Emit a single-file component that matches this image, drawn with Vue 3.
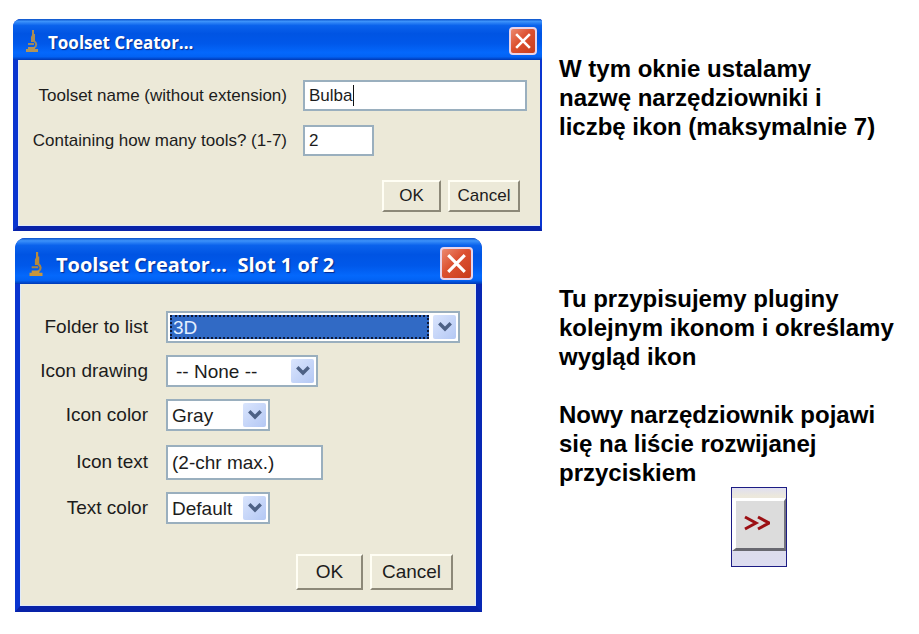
<template>
  <main class="page">
    <section class="dialog dialog-name">
      <header class="title-bar">
        <svg class="app-icon" viewBox="0 0 14 24" aria-hidden="true">
          <path d="M7 1h2v4h1v8H6V8l1-2z" fill="#a98d55" />
          <path d="M9 12c3 2 3 5 0 7M3 15h6" fill="none" stroke="#9a8a62" stroke-width="2" />
          <path d="M3 18h7v2h3v3H1v-3h2z" fill="#b29458" />
        </svg>
        <h1>Toolset Creator...</h1>
        <button class="close-btn" type="button" aria-label="Close">
          <svg viewBox="0 0 28 28"><path d="M6 6l16 16M22 6L6 22" /></svg>
        </button>
      </header>
      <form class="body" @submit.prevent>
        <div class="fields">
          <label for="toolset-name">Toolset name (without extension)</label>
          <div class="caret-field">
            <input id="toolset-name" v-model="toolsetName" type="text" />
            <span class="caret"></span>
          </div>
          <label for="tool-count">Containing how many tools? (1-7)</label>
          <input id="tool-count" v-model="toolCount" class="count" type="text" />
        </div>
        <div class="actions">
          <button class="btn ok" type="submit">OK</button>
          <button class="btn" type="button">Cancel</button>
        </div>
      </form>
    </section>

    <p class="note note-name">
      W tym oknie ustalamy<br />nazwę narzędziowniki i<br />liczbę ikon (maksymalnie 7)
    </p>

    <section class="dialog dialog-slot">
      <header class="title-bar">
        <svg class="app-icon" viewBox="0 0 14 24" aria-hidden="true">
          <path d="M7 1h2v4h1v8H6V8l1-2z" fill="#b88a3c" />
          <path d="M9 12c3 2 3 5 0 7M3 15h6" fill="none" stroke="#a98543" stroke-width="2" />
          <path d="M3 18h7v2h3v3H1v-3h2z" fill="#c8963c" />
        </svg>
        <h1>Toolset Creator...&nbsp; Slot 1 of 2</h1>
        <button class="close-btn" type="button" aria-label="Close">
          <svg viewBox="0 0 28 28"><path d="M6 6l16 16M22 6L6 22" /></svg>
        </button>
      </header>
      <form class="body" @submit.prevent>
        <div class="fields">
          <template v-for="field in fields" :key="field.id">
            <label :for="field.id">{{ field.label }}</label>
            <div v-if="field.options" class="combo" :class="field.id">
              <select :id="field.id" v-model="field.value">
                <option v-for="option in field.options" :key="option">{{ option }}</option>
              </select>
              <span class="arrow">
                <svg viewBox="0 0 14 10"><path d="M2 2l5 5 5-5" /></svg>
              </span>
            </div>
            <input v-else :id="field.id" v-model="field.value" :class="field.id" type="text" />
          </template>
        </div>
        <div class="actions">
          <button class="btn ok" type="submit">OK</button>
          <button class="btn" type="button">Cancel</button>
        </div>
      </form>
    </section>

    <div class="note note-slot">
      <p>Tu przypisujemy pluginy<br />kolejnym ikonom i określamy<br />wygląd ikon</p>
      <p>Nowy narzędziownik pojawi<br />się na liście rozwijanej<br />przyciskiem</p>
      <div class="switcher">
        <button type="button" aria-label="More tools">
          <svg viewBox="0 0 26 16"><path d="M1 2l11 6-11 6M14 2l11 6-11 6" /></svg>
        </button>
      </div>
    </div>
  </main>
</template>

<script setup>
import { ref } from "vue";

const toolsetName = ref("Bulba");
const toolCount = ref("2");

const fields = ref([
  { id: "folder", label: "Folder to list", value: "3D", options: ["3D"] },
  { id: "drawing", label: "Icon drawing", value: "-- None --", options: ["-- None --"] },
  { id: "icon-color", label: "Icon color", value: "Gray", options: ["Gray"] },
  { id: "icon-text", label: "Icon text", value: "(2-chr max.)" },
  { id: "text-color", label: "Text color", value: "Default", options: ["Default"] },
]);
</script>

<style>
body {
  margin: 0;
  background: #fff;
}
</style>

<style scoped>
* {
  box-sizing: border-box;
}
.page {
  display: grid;
  grid-template-columns: minmax(500px, 1fr) 343px;
  gap: 7px 17px;
  padding: 19px 17px 22px 13px;
  font-family: "Liberation Sans", Arial, sans-serif;
  color: #1c1c1c;
}
.dialog {
  display: flex;
  flex-direction: column;
  border-style: solid;
  border-color: #0a35d0;
  background: #0a35d0;
}
.dialog-name {
  border-width: 0 2px 5px 5px;
  border-bottom-color: #0822a8;
  border-radius: 8px 3px 0 0;
  font-size: 17px;
}
.dialog-slot {
  margin: 0 60px 0 2px;
  border-width: 0 6px 6px 5px;
  border-right-color: #0828b4;
  border-bottom-color: #0822a8;
  border-radius: 10px 10px 0 0;
  font-size: 19px;
}
.title-bar {
  display: flex;
  align-items: center;
  height: 41px;
  margin: 0 -2px 0 -5px;
  padding: 3px 5px 0 12px;
  border-radius: 8px 3px 0 0;
  background: linear-gradient(#0a50c8 0, #3c92fa 6%, #0a62ec 16%, #0054e3 36%, #0058ea 60%, #0468fc 82%, #0262f4 92%, #0038b4 100%);
}
.dialog-slot .title-bar {
  height: 46px;
  margin: 0 -6px 0 -5px;
  padding: 5px 9px 0 13px;
  border-radius: 10px 10px 0 0;
}
.app-icon {
  width: 14px;
  height: 24px;
  margin-right: 9px;
}
.dialog-slot .app-icon {
  width: 16px;
  height: 26px;
  margin-right: 12px;
}
h1 {
  flex: 1;
  margin: 0;
  padding-top: 3px;
  color: #fff;
  font-family: "Open Sans", "Noto Sans", sans-serif;
  font-size: 17px;
  font-weight: 700;
  line-height: 24px;
  white-space: nowrap;
  text-shadow: 1px 1px 1px #062a8c;
}
.dialog-slot h1 {
  font-size: 20px;
}
.close-btn {
  display: flex;
  width: 28px;
  height: 28px;
  padding: 0;
  border: 2px solid #e8d4ea;
  border-radius: 4px;
  background: linear-gradient(135deg, #ec8a70, #dc5030 45%, #c83c1c);
}
.dialog-slot .close-btn {
  width: 33px;
  height: 33px;
}
.close-btn svg {
  width: 100%;
  fill: none;
  stroke: #fff;
  stroke-width: 3;
}
.body {
  padding: 20px 13px 13px 0;
  border: solid #dfeafb;
  border-width: 0 0 1px 1px;
  background: #ece9d8;
}
.dialog-slot .body {
  padding: 27px 15px 15px 0;
  border-right-width: 1px;
}
.fields {
  display: grid;
  grid-template-columns: 268px 1fr;
  gap: 14px 16px;
  align-items: center;
}
.dialog-slot .fields {
  grid-template-columns: 127px 1fr;
  gap: 12px 18px;
}
label {
  text-align: right;
  white-space: nowrap;
}
input,
.combo {
  border: 2px solid #9aafbe;
  background: #fff;
}
input {
  width: 100%;
  height: 31px;
  padding: 0 4px;
  border-radius: 0;
  color: inherit;
  font: inherit;
  outline: none;
}
.count {
  width: 71px;
}
.icon-text {
  width: 157px;
  height: 35px;
  margin-top: 2px;
}
.caret-field {
  position: relative;
}
.caret {
  position: absolute;
  top: 5px;
  left: 50px;
  width: 1px;
  height: 21px;
  background: #111;
}
.combo {
  display: flex;
  gap: 2px;
  height: 32px;
  padding: 2px;
}
.drawing {
  width: 152px;
}
.icon-color,
.text-color {
  width: 104px;
}
select {
  flex: 1;
  min-width: 0;
  padding: 0 2px;
  border: 0;
  border-radius: 0;
  background: transparent;
  color: inherit;
  font: inherit;
  appearance: none;
  outline: none;
}
.drawing select {
  padding-left: 6px;
}
.folder select {
  margin-right: 2px;
  padding: 0 1px;
  border: 2px dotted #0c1838;
  background: #316ac5;
  color: #e4efff;
}
.arrow {
  display: flex;
  align-items: center;
  justify-content: center;
  width: 23px;
  border-radius: 2px;
  background: linear-gradient(135deg, #dae5fd, #b4c8f4);
}
.arrow svg {
  width: 16px;
  fill: none;
  stroke: #4d6185;
  stroke-width: 3;
}
.actions {
  display: flex;
  justify-content: flex-end;
  gap: 7px;
  margin: 24px 7px 0 0;
}
.dialog-slot .actions {
  margin-top: 30px;
}
.btn {
  width: 72px;
  height: 32px;
  padding: 0;
  border: 2px solid;
  border-color: #fffef4 #8c8878 #8c8878 #fffef4;
  background: #ece9d8;
  color: inherit;
  font: inherit;
}
.ok {
  width: 59px;
}
.dialog-slot .btn {
  width: 83px;
  height: 36px;
}
.dialog-slot .ok {
  width: 67px;
}
.note {
  margin: 0;
  color: #000;
  font-size: 24px;
  font-weight: 700;
  line-height: 29px;
  white-space: nowrap;
}
.note-name {
  padding-top: 35px;
}
.note-slot {
  padding-top: 46px;
}
.note-slot p {
  margin: 0 0 29px;
}
.note-slot p + p {
  margin: 0;
}
.switcher {
  width: 56px;
  height: 80px;
  margin-left: 50%;
  padding-top: 10px;
  border: 1px solid #1c1c84;
  background: linear-gradient(#e0dff0 0, #ece8dc 8px, #ece8dc 12px, #dcdcec 60px, #dcdcf0 100%);
}
.switcher button {
  display: flex;
  align-items: center;
  width: 100%;
  height: 53px;
  padding: 0 8px 4px;
  border: solid;
  border-color: #fff #74747e #686870 #fff;
  border-width: 3px 2px 3px 4px;
  background: #dcdcdc;
}
.switcher svg {
  width: 26px;
  fill: none;
  stroke: #9c1014;
  stroke-width: 3;
}
</style>
